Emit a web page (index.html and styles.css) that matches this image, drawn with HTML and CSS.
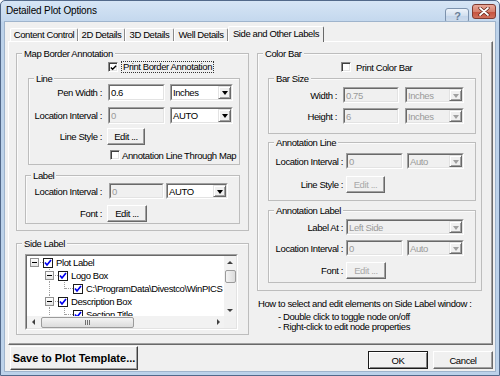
FILE: index.html
```html
<!DOCTYPE html>
<html>
<head>
<meta charset="utf-8">
<link rel="stylesheet" href="styles.css">
</head>
<body>
<div class="window">
  <div class="titlebar">
    <span class="title">Detailed Plot Options</span>
    <span class="tb-btn help">?</span>
    <span class="tb-btn close"><svg width="12" height="9" viewBox="0 0 12 9"><path d="M2 1 L10 8 M10 1 L2 8" stroke="#5a1d14" stroke-width="3.2" stroke-linecap="round"/><path d="M2 1 L10 8 M10 1 L2 8" stroke="#fff" stroke-width="1.8" stroke-linecap="round"/></svg></span>
  </div>
  <div class="client">
    <div class="tabs">
      <span class="tab t1">Content Control</span>
      <span class="tab t2">2D Details</span>
      <span class="tab t3">3D Details</span>
      <span class="tab t4">Well Details</span>
      <span class="tab sel">Side and Other Labels</span>
    </div>
    <div class="panel">
      <div class="col col-left">
        <div class="group g-map">
          <span class="legend">Map Border Annotation</span>
          <div class="chkrow cr-map">
            <span class="cb"><svg width="8" height="8" viewBox="0 0 8 8"><path d="M1 3.5 L3 5.5 L7 1.5" stroke="#000" stroke-width="1.6" fill="none"/></svg></span>
            <span class="focus">Print Border Annotation</span>
          </div>
          <div class="group g-line">
            <span class="legend">Line</span>
            <div class="frow r-pen">
              <span class="lbl l73">Pen Width :</span>
              <span class="field w57"><span class="fi">0.6</span></span>
              <span class="field combo w63 ml5"><span class="fi"><span class="val">Inches</span><span class="drop"></span></span></span>
            </div>
            <div class="frow r-loc1">
              <span class="lbl l73">Location Interval :</span>
              <span class="field dis w57"><span class="fi">0</span></span>
              <span class="field combo w63 ml5"><span class="fi"><span class="val">AUTO</span><span class="drop"></span></span></span>
            </div>
            <div class="frow r-style1">
              <span class="lbl l73 mr5">Line Style :</span>
              <span class="btn w38">Edit ...</span>
            </div>
            <div class="chkrow cr-through">
              <span class="cb"></span>
              <span class="cbtext">Annotation Line Through Map</span>
            </div>
          </div>
          <div class="group g-label">
            <span class="legend">Label</span>
            <div class="frow r-loc2">
              <span class="lbl l76 mr7">Location Interval :</span>
              <span class="field dis w55"><span class="fi">0</span></span>
              <span class="field combo w62 ml2"><span class="fi"><span class="val">AUTO</span><span class="drop"></span></span></span>
            </div>
            <div class="frow r-font1">
              <span class="lbl l76 mr5">Font :</span>
              <span class="btn w40">Edit ...</span>
            </div>
          </div>
        </div>
        <div class="group g-side">
          <span class="legend">Side Label</span>
          <div class="field tree">
            <div class="fi tree-in">
              <div class="tree-rows">
                <div class="trow">
                  <span class="slot"><span class="hl"></span><span class="exp"></span></span>
                  <span class="tcb"><svg width="8" height="8" viewBox="0 0 8 8"><path d="M1 3.5 L3 6 L7 1" stroke="#0000f0" stroke-width="1.7" fill="none"/></svg></span>
                  <span class="tlabel">Plot Label</span>
                </div>
                <div class="trow">
                  <span class="ind"></span>
                  <span class="slot"><span class="vl"></span><span class="hl"></span><span class="exp"></span></span>
                  <span class="tcb"><svg width="8" height="8" viewBox="0 0 8 8"><path d="M1 3.5 L3 6 L7 1" stroke="#0000f0" stroke-width="1.7" fill="none"/></svg></span>
                  <span class="tlabel">Logo Box</span>
                </div>
                <div class="trow">
                  <span class="ind"></span>
                  <span class="ind"><span class="vl"></span></span>
                  <span class="slot"><span class="vl half"></span><span class="hl"></span></span>
                  <span class="tcb"><svg width="8" height="8" viewBox="0 0 8 8"><path d="M1 3.5 L3 6 L7 1" stroke="#0000f0" stroke-width="1.7" fill="none"/></svg></span>
                  <span class="tlabel">C:\ProgramData\Divestco\WinPICS</span>
                </div>
                <div class="trow">
                  <span class="ind"></span>
                  <span class="slot"><span class="vl"></span><span class="hl"></span><span class="exp"></span></span>
                  <span class="tcb"><svg width="8" height="8" viewBox="0 0 8 8"><path d="M1 3.5 L3 6 L7 1" stroke="#0000f0" stroke-width="1.7" fill="none"/></svg></span>
                  <span class="tlabel">Description Box</span>
                </div>
                <div class="trow">
                  <span class="ind"></span>
                  <span class="ind"><span class="vl"></span></span>
                  <span class="slot"><span class="vl"></span><span class="hl"></span></span>
                  <span class="tcb"><svg width="8" height="8" viewBox="0 0 8 8"><path d="M1 3.5 L3 6 L7 1" stroke="#0000f0" stroke-width="1.7" fill="none"/></svg></span>
                  <span class="tlabel">Section Title</span>
                </div>
              </div>
              <div class="vbar">
                <span class="sbtn"><span class="arr up"></span></span>
                <span class="vtrack"><span class="vthumb"></span></span>
                <span class="sbtn"><span class="arr down"></span></span>
              </div>
              <div class="hbar">
                <span class="sbtn"><span class="arr left"></span></span>
                <span class="htrack"><span class="hthumb"><span class="grip"></span></span></span>
                <span class="sbtn"><span class="arr right"></span></span>
              </div>
              <div class="corner"></div>
            </div>
          </div>
        </div>
      </div>
      <div class="col col-right">
        <div class="group g-color">
          <span class="legend">Color Bar</span>
          <div class="chkrow cr-color">
            <span class="cb"></span>
            <span class="cbtext ml5">Print Color Bar</span>
          </div>
          <div class="group g-bar">
            <span class="legend">Bar Size</span>
            <div class="frow r-w">
              <span class="lbl l68 mr6">Width :</span>
              <span class="field dis w56"><span class="fi">0.75</span></span>
              <span class="field combo dis w59 ml6"><span class="fi"><span class="val">Inches</span><span class="drop"></span></span></span>
            </div>
            <div class="frow r-h">
              <span class="lbl l68 mr6">Height :</span>
              <span class="field dis w56"><span class="fi">6</span></span>
              <span class="field combo dis w59 ml6"><span class="fi"><span class="val">Inches</span><span class="drop"></span></span></span>
            </div>
          </div>
          <div class="group g-aline">
            <span class="legend">Annotation Line</span>
            <div class="frow r-loc3">
              <span class="lbl l74 mr3">Location Interval :</span>
              <span class="field dis w57"><span class="fi">0</span></span>
              <span class="field combo dis w57 ml4"><span class="fi"><span class="val">Auto</span><span class="drop"></span></span></span>
            </div>
            <div class="frow r-style2">
              <span class="lbl l74 mr3">Line Style :</span>
              <span class="btn dis w39">Edit ...</span>
            </div>
          </div>
          <div class="group g-alabel">
            <span class="legend">Annotation Label</span>
            <div class="frow r-at">
              <span class="lbl l74 mr3">Label At :</span>
              <span class="field combo dis w118"><span class="fi"><span class="val">Left Side</span><span class="drop"></span></span></span>
            </div>
            <div class="frow r-loc4">
              <span class="lbl l74 mr3">Location Interval :</span>
              <span class="field dis w57"><span class="fi">0</span></span>
              <span class="field combo dis w57 ml4"><span class="fi"><span class="val">Auto</span><span class="drop"></span></span></span>
            </div>
            <div class="frow r-font2">
              <span class="lbl l74 mr3">Font :</span>
              <span class="btn dis w40">Edit ...</span>
            </div>
          </div>
        </div>
        <div class="help">
          <div class="h1">How to select and edit elements on Side Label window :</div>
          <div class="h2">- Double click to toggle node on/off</div>
          <div class="h3">- Right-click to edit node properties</div>
        </div>
      </div>
    </div>
    <div class="footer">
      <span class="btn save">Save to Plot Template...</span>
      <span class="btn ok">OK</span>
      <span class="btn cancel">Cancel</span>
    </div>
  </div>
</div>
</body>
</html>
```

FILE: styles.css
```css
* { box-sizing: border-box; }
html, body { margin: 0; padding: 0; background: #fff; }
body {
  font-family: "Liberation Sans", Arial, sans-serif;
  font-size: 9.5px;
  letter-spacing: -0.4px;
  color: #000;
}
.window {
  width: 500px;
  height: 376px;
  display: flex;
  flex-direction: column;
  border: 1px solid #52698a;
  border-radius: 5px 5px 0 0;
  padding: 0 3px 3px 3px;
  background: linear-gradient(#d6e5f5 0, #c4d8ee 20px, #bcd2ea 21px, #bcd2ea 100%);
}
.titlebar {
  height: 20px;
  display: flex;
  align-items: flex-start;
  padding: 0 0 0 2px;
}
.title {
  font-size: 10px;
  letter-spacing: -0.15px;
  margin-top: 4px;
  color: #000;
  flex: 1;
}
.tb-btn {
  margin-top: 3px;
  width: 24px;
  height: 15px;
  border-radius: 3px;
  display: flex;
  align-items: center;
  justify-content: center;
}
.help {
  font-size: 10px;
}
.tb-btn.help {
  background: linear-gradient(#eef3fa, #d3e0ef 50%, #c2d4ea 51%, #cfdcec);
  border: 1px solid #7c92ad;
  color: #6a7f99;
  font-weight: bold;
  font-size: 11px;
  margin-right: 3px;
}
.tb-btn.close {
  background: linear-gradient(#e9a99a, #d6816f 50%, #c5503c 51%, #d0705c);
  border: 1px solid #7f3b31;
}
.client {
  flex: 1;
  background: #f0f0f0;
  border: 1px solid #9fb4cc;
  display: flex;
  flex-direction: column;
}
.tabs {
  display: flex;
  align-items: flex-end;
  height: 15px;
  margin-top: 4px;
  padding-left: 5px;
}
.tab {
  height: 13px;
  line-height: 11px;
  text-align: center;
  border-top: 1px solid #fff;
  border-left: 1px solid #fff;
  border-right: 1px solid #8a8a8a;
  border-radius: 2px 2px 0 0;
  background: #f0f0f0;
}
.t1 { width: 68px; }
.t2 { width: 47px; }
.t3 { width: 49px; }
.t4 { width: 54px; }
.tab.sel {
  width: 96px;
  height: 16px;
  margin-bottom: -1px;
  position: relative;
  z-index: 1;
  line-height: 13px;
  border-right: 1px solid #696969;
}
.panel {
  margin-left: 3px;
  width: 485px;
  height: 304px;
  border-top: 1px solid #fff;
  border-left: 1px solid #fff;
  border-right: 1px solid #696969;
  border-bottom: 1px solid #696969;
  box-shadow: inset -1px -1px 0 #a0a0a0;
  display: flex;
  gap: 8px;
  padding: 11px 0 0 7px;
}
.col-left { width: 233px; display: flex; flex-direction: column; }
.col-right { width: 225px; display: flex; flex-direction: column; }

.group {
  position: relative;
  border: 1px solid #bdbdbd;
  box-shadow: inset 1px 1px 0 #fbfbfb;
  display: flex;
  flex-direction: column;
}
.legend {
  position: absolute;
  top: -6px;
  left: 5px;
  line-height: 11px;
  padding: 0 2px;
  background: #f0f0f0;
  white-space: nowrap;
}
.g-map { height: 178px; }
.g-line { margin: 5px 0 0 11px; width: 212px; height: 87px; }
.g-label { margin: 10px 0 0 8px; width: 215px; height: 49px; }
.g-side { margin-top: 12px; height: 92px; }
.g-color { height: 238px; }
.g-bar { margin: 5px 0 0 10px; width: 208px; height: 56px; }
.g-aline { margin: 8px 0 0 10px; width: 208px; height: 59px; }
.g-alabel { margin: 9px 0 0 10px; width: 208px; height: 73px; }

.chkrow { display: flex; align-items: center; white-space: nowrap; }
.cr-map { margin-top: 7px; padding-left: 91px; height: 12px; }
.cr-through { margin-top: 5px; padding-left: 81px; height: 10px; }
.cr-color { margin-top: 7px; padding-left: 83px; height: 12px; }
.cb {
  width: 10px;
  height: 10px;
  background: #fff;
  border-top: 1px solid #8a8a8a;
  border-left: 1px solid #8a8a8a;
  border-right: 1px solid #fff;
  border-bottom: 1px solid #fff;
  box-shadow: inset 1px 1px 0 #404040, inset -1px -1px 0 #e3e3e3;
  display: flex;
  align-items: center;
  justify-content: center;
  flex: none;
}
.cb svg { margin: 1px 0 0 1px; }
.focus {
  margin-left: 3px;
  border: 1px dotted #333;
  padding: 0 1px;
  line-height: 10px;
}
.cr-through .cbtext { margin-left: 2px; }
.ml5 { margin-left: 5px; }

.frow { display: flex; align-items: center; white-space: nowrap; }
.lbl { text-align: right; flex: none; margin-right: 6px; }
.l73 { width: 73px; }
.l76 { width: 76px; }
.l68 { width: 68px; }
.l74 { width: 74px; }
.mr3 { margin-right: 3px; }
.mr5 { margin-right: 5px; }
.mr6 { margin-right: 6px; }
.mr7 { margin-right: 7px; }
.ml2 { margin-left: 2px; }
.ml4 { margin-left: 4px; }
.ml6 { margin-left: 6px; }

.r-pen { margin-top: 5px; height: 17px; }
.r-loc1 { margin-top: 6px; height: 17px; }
.r-style1 { margin-top: 4px; height: 17px; }
.r-loc2 { margin-top: 7px; height: 16px; }
.r-font1 { margin-top: 6px; height: 17px; }
.r-w { margin-top: 8px; height: 16px; }
.r-h { margin-top: 5px; height: 16px; }
.r-loc3 { margin-top: 10px; height: 16px; }
.r-style2 { margin-top: 7px; height: 17px; }
.r-at { margin-top: 8px; height: 16px; }
.r-loc4 { margin-top: 5px; height: 16px; }
.r-font2 { margin-top: 6px; height: 17px; }

.field {
  height: 100%;
  flex: none;
  border-top: 1px solid #a0a0a0;
  border-left: 1px solid #a0a0a0;
  border-right: 1px solid #fff;
  border-bottom: 1px solid #fff;
}
.fi {
  display: flex;
  align-items: center;
  height: 100%;
  background: #fff;
  border-top: 1px solid #696969;
  border-left: 1px solid #696969;
  border-right: 1px solid #e3e3e3;
  border-bottom: 1px solid #e3e3e3;
  padding-left: 1px;
  line-height: 11px;
}
.field.dis .fi { background: #f0f0f0; color: #9a9a9a; }
.combo .val { flex: 1; }
.drop {
  width: 13px;
  height: 100%;
  flex: none;
  background: #f0f0f0;
  border-top: 1px solid #e3e3e3;
  border-left: 1px solid #e3e3e3;
  border-right: 1px solid #696969;
  border-bottom: 1px solid #696969;
  box-shadow: inset 1px 1px 0 #fff, inset -1px -1px 0 #a0a0a0;
  display: flex;
  align-items: center;
  justify-content: center;
}
.drop::after {
  content: "";
  border-left: 3.5px solid transparent;
  border-right: 3.5px solid transparent;
  border-top: 4px solid #000;
  margin-top: 1px;
}
.field.dis .drop::after { border-top-color: #a0a0a0; }
.w55 { width: 55px; }
.w56 { width: 56px; }
.w57 { width: 57px; }
.w59 { width: 59px; }
.w62 { width: 62px; }
.w63 { width: 63px; }
.w118 { width: 118px; }
.w38 { width: 38px; }
.w39 { width: 39px; }
.w40 { width: 40px; }

.btn {
  height: 100%;
  flex: none;
  background: #f0f0f0;
  border-top: 1px solid #fff;
  border-left: 1px solid #fff;
  border-right: 1px solid #696969;
  border-bottom: 1px solid #696969;
  box-shadow: inset -1px -1px 0 #a0a0a0;
  display: flex;
  align-items: center;
  justify-content: center;
  white-space: nowrap;
  line-height: 11px;
}
.btn.dis { color: #a8a8a8; }

/* tree */
.tree { width: 213px; height: 76px; margin: 10px 0 0 8px; }
.tree-in {
  padding: 0;
  display: grid;
  grid-template-columns: 197px 12px;
  grid-template-rows: 60px 12px;
  align-items: stretch;
}
.tree-rows { overflow: hidden; padding-top: 0; background: #fff; }
.trow {
  height: 13px;
  display: flex;
  align-items: center;
  padding-left: 3px;
  white-space: nowrap;
}
.ind { width: 15px; height: 13px; position: relative; flex: none; }
.slot { width: 9px; height: 13px; position: relative; margin-right: 4px; flex: none; }
.vl {
  position: absolute;
  left: 4px;
  top: 0;
  bottom: 0;
  border-left: 1px dotted #a0a0a0;
}
.vl.half { bottom: 6px; }
.hl {
  position: absolute;
  left: 5px;
  right: -4px;
  top: 6px;
  border-top: 1px dotted #a0a0a0;
}
.exp {
  position: absolute;
  left: 0;
  top: 2px;
  width: 9px;
  height: 9px;
  border: 1px solid #919191;
  background: linear-gradient(#ffffff, #e4e4e4);
}
.exp::after {
  content: "";
  position: absolute;
  left: 1px;
  top: 3px;
  width: 5px;
  height: 1px;
  background: #000;
}
.tcb {
  width: 10px;
  height: 10px;
  flex: none;
  border: 1px solid #1c1c1c;
  background: #fff;
  display: flex;
  align-items: center;
  justify-content: center;
}
.tlabel { margin-left: 3px; line-height: 12px; }

.vbar { grid-row: 1; grid-column: 2; display: flex; flex-direction: column; background: #f2f2f2; }
.hbar { grid-row: 2; grid-column: 1; display: flex; background: #f2f2f2; }
.corner { grid-row: 2; grid-column: 2; background: #f0f0f0; }
.sbtn {
  width: 12px;
  height: 12px;
  flex: none;
  display: flex;
  align-items: center;
  justify-content: center;
}
.vtrack { flex: 1; padding-top: 2px; display: flex; flex-direction: column; align-items: center; }
.vthumb {
  width: 11px;
  height: 13px;
  border: 1px solid #9b9b9b;
  border-radius: 2px;
  background: linear-gradient(90deg, #f4f4f4, #dcdcdc);
}
.htrack { flex: 1; padding-left: 2px; display: flex; align-items: center; }
.hthumb {
  width: 93px;
  height: 11px;
  border: 1px solid #9b9b9b;
  border-radius: 2px;
  background: linear-gradient(#f4f4f4, #dcdcdc);
  display: flex;
  align-items: center;
  justify-content: center;
}
.grip {
  width: 5px;
  height: 5px;
  border-left: 1px solid #707070;
  border-right: 1px solid #707070;
  position: relative;
}
.grip::after {
  content: "";
  position: absolute;
  left: 1px;
  top: 0;
  width: 1px;
  height: 5px;
  background: #707070;
}
.arr { width: 0; height: 0; }
.arr.up { border-left: 3px solid transparent; border-right: 3px solid transparent; border-bottom: 3px solid #404040; }
.arr.down { border-left: 3px solid transparent; border-right: 3px solid transparent; border-top: 3px solid #404040; }
.arr.left { border-top: 3px solid transparent; border-bottom: 3px solid transparent; border-right: 3px solid #404040; }
.arr.right { border-top: 3px solid transparent; border-bottom: 3px solid transparent; border-left: 3px solid #404040; }

/* help text */
.help { margin-top: 7px; padding-left: 1px; font-size: 9.5px; }
.help .h1 { line-height: 11px; }
.help .h2 { line-height: 10px; margin-top: 3px; padding-left: 20px; }
.help .h3 { line-height: 10px; padding-left: 20px; }

/* footer */
.footer {
  display: flex;
  align-items: flex-start;
  padding: 1px 2px 0 5px;
  flex: 1;
}
.btn.save {
  width: 128px;
  height: 24px;
  font-weight: bold;
  font-size: 11px;
  letter-spacing: 0;
  border-top: 1px solid #fff;
  border-left: 1px solid #fff;
  border-right: 1px solid #404040;
  border-bottom: 1px solid #404040;
}
.btn.ok {
  margin-left: auto;
  margin-top: 5px;
  width: 60px;
  height: 18px;
  border: 1px solid #1a1a1a;
  box-shadow: inset 1px 1px 0 #fff, inset -1px -1px 0 #808080;
}
.btn.cancel {
  margin-left: 5px;
  margin-top: 5px;
  width: 60px;
  height: 18px;
}
```
